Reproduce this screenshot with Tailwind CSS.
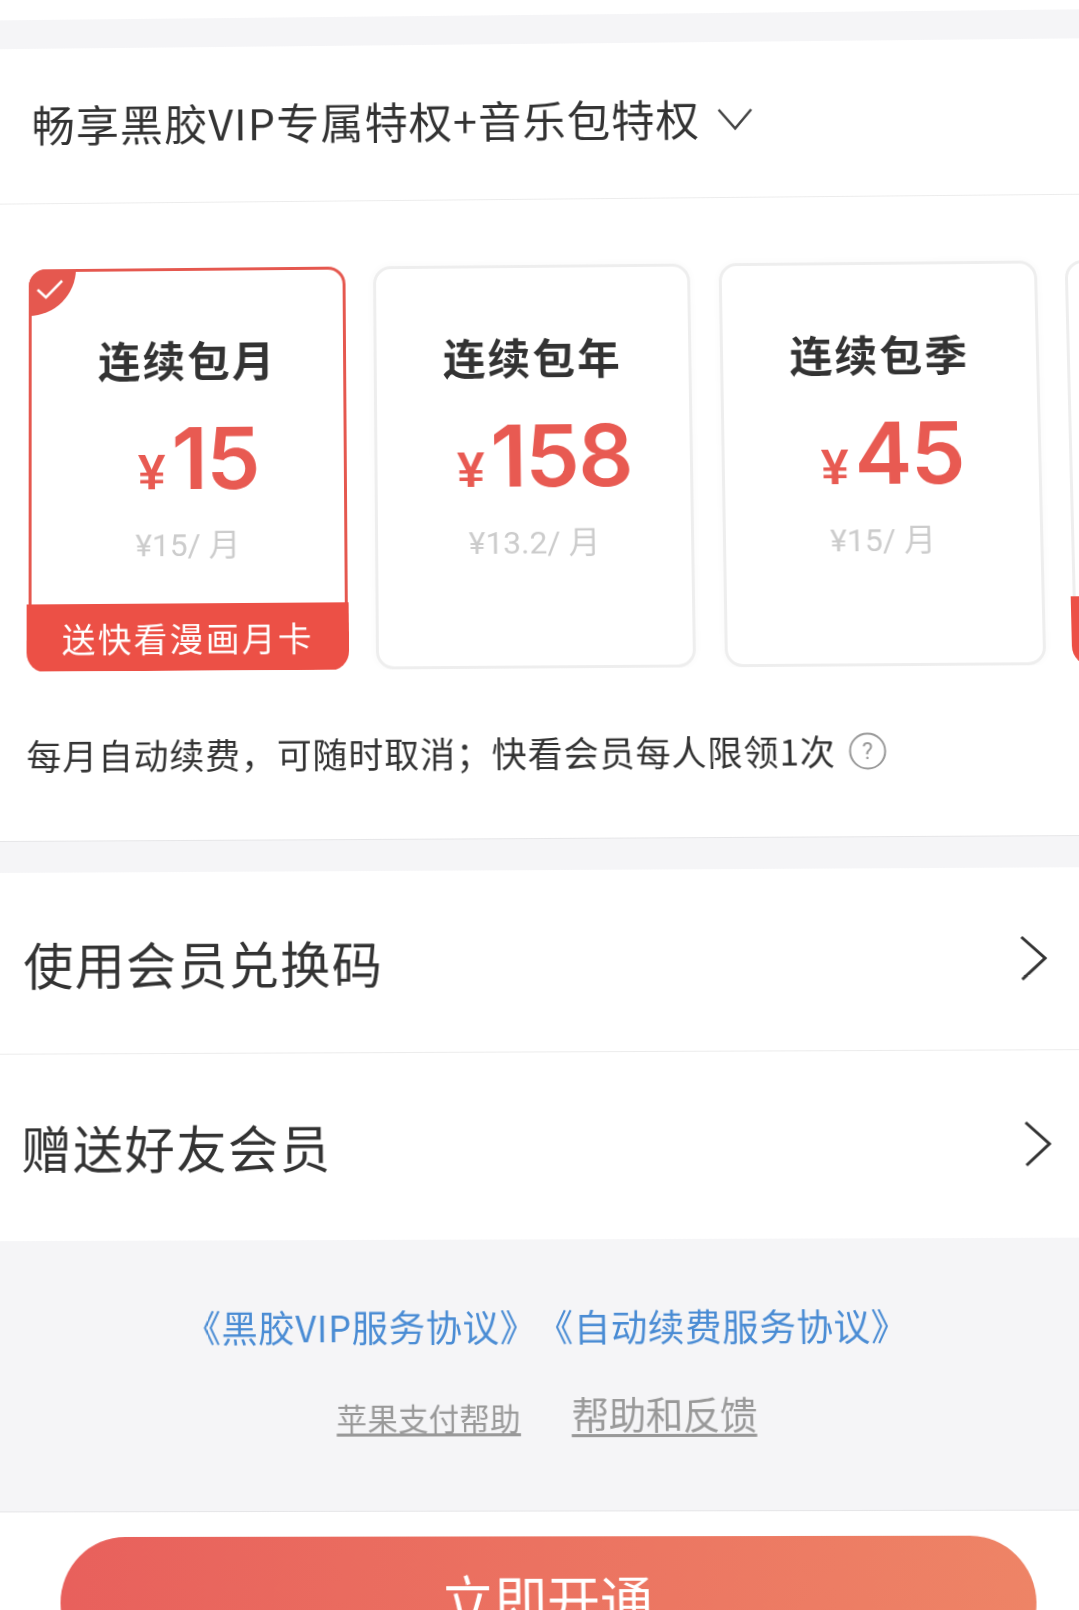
<!DOCTYPE html>
<html lang="zh-CN">
<head>
  <meta charset="UTF-8" />
  <meta name="viewport" content="width=device-width, initial-scale=1.0"/>
  <title>黑胶VIP</title>
  <script src="https://cdn.jsdelivr.net/npm/@tailwindcss/browser@4"></script>
</head>
<body class="bg-white">
  <div class="w-[1079px] h-[1610px] overflow-hidden bg-white text-[#333] font-['Noto_Sans_CJK_SC',sans-serif]">
    <!-- the reference is a photo of a phone, so the whole page sits in a slight perspective -->
    <div class="w-[1179px] h-[1690px] -ml-[50px] -mt-[40px] px-[50px] origin-center [transform:matrix3d(1,-0.0057,0,-0.00000572,0.0115,1,0,-0.0000235,0,0,1,0,0,0,0,1)]">
      <div class="h-[40px]"></div>
      <div class="-mx-[50px] h-[30px] bg-[#f5f5f7]"></div>

      <!-- Title -->
      <div class="-mx-[50px] px-[50px] h-[161px] border-b border-[#ececec] flex items-center">
        <span class="ml-[30px] mb-[4px] text-[44px] leading-none tracking-[1.05px] whitespace-nowrap">畅享黑胶VIP专属特权+音乐包特权</span>
        <svg class="ml-[18px]" width="36" height="24" viewBox="0 0 36 24" fill="none" stroke="#444" stroke-width="2.6"><path d="M1.5 2 L18 21.5 L34.5 2"/></svg>
      </div>

      <!-- Plans -->
      <div class="-mx-[50px] px-[50px] h-[648px] border-b border-[#e6e6e8]">
        <div class="flex gap-[29px] pl-[27px] pt-[67px] -mr-[50px] overflow-hidden">
          <div class="relative shrink-0 w-[322px] h-[410px] rounded-[18px] border-[3px] border-[#e5584f] bg-white flex flex-col items-center">
            <div class="absolute -left-[3px] -top-[3px] w-[48px] h-[48px] bg-[#e5584f] rounded-tl-[18px] rounded-br-[48px]">
              <svg class="ml-[7px] mt-[9px]" width="30" height="24" viewBox="0 0 30 24" fill="none" stroke="#fff" stroke-width="2.6"><path d="M2 12 L10.5 20 L27 3"/></svg>
            </div>
            <div class="mt-[62px] h-[56px] leading-[56px] text-[43px] font-semibold tracking-[2.3px]">连续包月</div>
            <div class="mt-[30px] h-[88px] pl-[22px] flex items-baseline text-[#e85a52] font-['Inter',sans-serif]">
              <span class="text-[50px] font-bold font-['Liberation_Sans',sans-serif] mr-[6px]">¥</span><span class="text-[87px] leading-[88px] font-semibold -tracking-[1.5px]">15</span>
            </div>
            <div class="mt-[24px] h-[40px] leading-[40px] text-[32px] text-[#cccccc] font-['Roboto','Noto_Sans_CJK_SC',sans-serif]">¥15/ 月</div>
            <div class="mt-auto -mb-[4px] -ml-[5px] -mr-[4px] self-stretch h-[69px] rounded-b-[20px] bg-[#ec5046] text-white text-[34px] tracking-[2.3px] flex items-center justify-center">送快看漫画月卡</div>
          </div>

          <div class="-ml-[1px] shrink-0 w-[321px] h-[410px] rounded-[18px] border-[3px] border-[#eeeeee] bg-white shadow-[0_0_8px_rgba(0,0,0,0.03)] flex flex-col items-center">
            <div class="mt-[62px] h-[56px] leading-[56px] text-[43px] font-semibold tracking-[2.3px]">连续包年</div>
            <div class="mt-[30px] h-[88px] pl-[22px] flex items-baseline text-[#e85a52] font-['Inter',sans-serif]">
              <span class="text-[50px] font-bold font-['Liberation_Sans',sans-serif] mr-[6px]">¥</span><span class="text-[87px] leading-[88px] font-semibold -tracking-[1.5px]">158</span>
            </div>
            <div class="mt-[24px] h-[40px] leading-[40px] text-[32px] text-[#cccccc] font-['Roboto','Noto_Sans_CJK_SC',sans-serif]">¥13.2/ 月</div>
          </div>

          <div class="shrink-0 w-[321px] h-[410px] rounded-[18px] border-[3px] border-[#eeeeee] bg-white shadow-[0_0_8px_rgba(0,0,0,0.03)] flex flex-col items-center">
            <div class="mt-[62px] h-[56px] leading-[56px] text-[43px] font-semibold tracking-[2.3px]">连续包季</div>
            <div class="mt-[30px] h-[88px] pl-[22px] flex items-baseline text-[#e85a52] font-['Inter',sans-serif]">
              <span class="text-[50px] font-bold font-['Liberation_Sans',sans-serif] mr-[6px]">¥</span><span class="text-[87px] leading-[88px] font-semibold -tracking-[1.5px]">45</span>
            </div>
            <div class="mt-[24px] h-[40px] leading-[40px] text-[32px] text-[#cccccc] font-['Roboto','Noto_Sans_CJK_SC',sans-serif]">¥15/ 月</div>
          </div>

          <div class="shrink-0 w-[321px] h-[410px] -ml-[1px] rounded-[18px] border-[3px] border-[#eeeeee] bg-white flex flex-col">
            <div class="mt-auto -mb-[4px] -ml-[5px] h-[70px] rounded-b-[20px] bg-[#ec5046]"></div>
          </div>
        </div>

        <div class="flex items-center mt-[60px] pl-[25px]">
          <span class="text-[35px] leading-[48px] tracking-[0.95px] whitespace-nowrap">每月自动续费，可随时取消；快看会员每人限领1次</span>
          <svg class="ml-[13px] mt-[2px]" width="38" height="38" viewBox="0 0 38 38" fill="none">
            <circle cx="19" cy="19" r="17.5" stroke="#999" stroke-width="2"/>
            <text x="19" y="27" text-anchor="middle" font-size="23" fill="#999" font-family="Roboto">?</text>
          </svg>
        </div>
      </div>
      <div class="-mx-[50px] h-[31px] bg-[#f5f5f7]"></div>

      <!-- Rows -->
      <div class="-mx-[50px] h-[181px] border-b border-[#ececec] flex items-center justify-between pl-[72px] pr-[87px]">
        <span class="text-[50px] tracking-[1.4px] leading-none">使用会员兑换码</span>
        <svg width="27" height="46" viewBox="0 0 27 46" fill="none" stroke="#333" stroke-width="3"><path d="M2 2 L25 23 L2 44"/></svg>
      </div>
      <div class="-mx-[50px] h-[184px] flex items-center justify-between pl-[70px] pr-[87px]">
        <span class="mb-[3px] text-[50px] tracking-[1.5px] leading-none">赠送好友会员</span>
        <svg width="27" height="46" viewBox="0 0 27 46" fill="none" stroke="#333" stroke-width="3"><path d="M2 2 L25 23 L2 44"/></svg>
      </div>

      <!-- Agreements -->
      <div class="-mx-[50px] h-[265px] bg-[#f5f5f7] border-b border-[#e6e6e8] flex flex-col items-center pt-[57px]">
        <div class="flex text-[36px] leading-[54px] text-[#4a8cd4] tracking-[0.6px] whitespace-nowrap">
          <a>《黑胶VIP服务协议》</a>
          <a>《自动续费服务协议》</a>
        </div>
        <div class="mt-[34px] flex items-end gap-[50px] text-[#999]">
          <a class="text-[30px] leading-[44px] tracking-[0.3px] underline underline-offset-[3px]">苹果支付帮助</a>
          <a class="text-[37px] leading-[50px] -tracking-[0.5px] underline underline-offset-[4px]">帮助和反馈</a>
        </div>
      </div>

      <!-- Open button -->
      <div class="pt-[24px] pl-[59px] pr-[62px]">
        <div class="h-[128px] pb-[8px] rounded-full bg-gradient-to-r from-[#e8605c] to-[#ee8466] text-white text-[52px] flex items-center justify-center">立即开通</div>
      </div>
    </div>
  </div>
</body>
</html>
